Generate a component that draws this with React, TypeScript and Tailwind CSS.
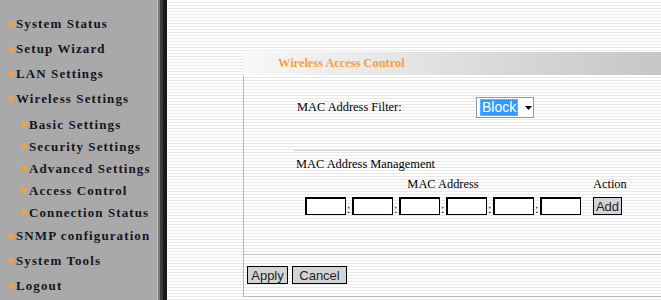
const serif = "font-['Liberation_Serif','Times_New_Roman',serif]";
const sans = "font-['Liberation_Sans',Arial,sans-serif]";
const stripes =
  "bg-[image:repeating-linear-gradient(to_bottom,#ffffff_0px,#ffffff_2px,#e9e9e9_2px,#e9e9e9_3px)]";

const Bullet = () => (
  <svg width="8" height="8" viewBox="0 0 8 8" className="shrink-0">
    <path
      d="M4 0 Q5 2.9 8 4 Q5 5.1 4 8 Q3 5.1 0 4 Q3 2.9 4 0 Z"
      fill="#f9a03c"
    />
  </svg>
);

const MenuItem = ({ label, sub = false }: { label: string; sub?: boolean }) => (
  <div
    className={`flex items-center ${sub ? "h-[22px] pl-[20px]" : "h-[25px] pl-[7px]"}`}
  >
    <Bullet />
    <span
      className={`${serif} ml-[1px] text-[13px] font-bold tracking-[1.1px] text-[#15151f] leading-none`}
    >
      {label}
    </span>
  </div>
);

const Sidebar = () => (
  <div className="flex h-full shrink-0">
    <div className="w-[157px] h-full bg-[#a9a9a9] pt-[11px]">
      <MenuItem label="System Status" />
      <MenuItem label="Setup Wizard" />
      <MenuItem label="LAN Settings" />
      <MenuItem label="Wireless Settings" />
      <div className="pt-[2px]">
        <MenuItem sub label="Basic Settings" />
        <MenuItem sub label="Security Settings" />
        <MenuItem sub label="Advanced Settings" />
        <MenuItem sub label="Access Control" />
        <MenuItem sub label="Connection Status" />
      </div>
      <MenuItem label="SNMP configuration" />
      <MenuItem label="System Tools" />
      <MenuItem label="Logout" />
    </div>
    {/* dark edge */}
    <div className="w-[1px] h-full bg-[#c2c2c2]" />
    <div className="w-[2px] h-full bg-[#7a7a7a]" />
    <div className="w-[3px] h-full bg-[#3c3c3c]" />
    <div className="w-[4px] h-full bg-[#1a1a1a]" />
  </div>
);

const MacInput = () => (
  <div className="w-[41px] h-[18px] bg-white border border-black border-t-2 border-l-2" />
);

const Button = ({ label, width }: { label: string; width: string }) => (
  <div
    className={`${sans} ${width} h-[18px] flex items-center justify-center bg-[#d4d4d4] border border-black text-[13px] text-[#1b1f2e] leading-none`}
  >
    {label}
  </div>
);

export default function App() {
  return (
    <div className={`flex w-[661px] h-[300px] overflow-hidden bg-white`}>
      <Sidebar />

      <div className={`flex-1 h-full ${stripes} pl-[76px] pt-[52px]`}>
        <div className="flex flex-col w-full">
          {/* Title bar */}
          <div className="h-[23px] flex items-center pl-[35px] bg-linear-to-r from-[#f8f8f8] to-[#c6c6c6]">
            <span className={`${serif} text-[12.4px] font-bold text-[#f7a03c]`}>
              Wireless Access Control
            </span>
          </div>

          {/* Body */}
          <div className="h-[222px] border-l border-b border-[#b8b8b8] flex flex-col">
            <div className="flex items-center pl-[53px] pt-[22px]">
              <span className={`${serif} w-[179px] text-[12.4px] text-black`}>
                MAC Address Filter:
              </span>
              <div className="w-[58px] h-[21px] border border-[#7f9db9] bg-white flex items-center pl-[3px]">
                <span
                  className={`${sans} text-[14px] leading-[15px] bg-[#3399ff] text-white px-[1px] border border-dotted border-[#f0b060]`}
                >
                  Block
                </span>
                <svg width="7" height="4" viewBox="0 0 7 4" className="ml-[7px]">
                  <path d="M0 0 H7 L3.5 4 Z" fill="#000" />
                </svg>
              </div>
            </div>

            {/* MAC management block */}
            <div className="ml-[50px] mt-[32px] border-t border-[#cfcfcf] pt-[6px]">
              <div className={`${serif} text-[12.4px] leading-[14px] text-black pl-[2px]`}>
                MAC Address Management
              </div>
              <div className={`flex mt-[6px] pl-[11px] ${serif} text-[12.4px] leading-[14px] text-black`}>
                <div className="w-[288px] text-center pr-[12px]">MAC Address</div>
                <div>Action</div>
              </div>
              <div className="flex items-end mt-[6px] pl-[11px]">
                {[0, 1, 2, 3, 4, 5].map((i) => (
                  <div key={i} className="flex items-end">
                    <MacInput />
                    {i < 5 && (
                      <span className={`${serif} w-[6px] pl-[1px] text-[12px] leading-[12px] text-black`}>
                        :
                      </span>
                    )}
                  </div>
                ))}
                <div className="ml-[12px]">
                  <Button label="Add" width="w-[29px]" />
                </div>
              </div>
            </div>

            <div className="mt-[39px] border-t border-[#c8c8c8]" />

            <div className="flex gap-[4px] pl-[3px] pt-[11px]">
              <Button label="Apply" width="w-[41px]" />
              <Button label="Cancel" width="w-[55px]" />
            </div>
          </div>
        </div>
      </div>
    </div>
  );
}
